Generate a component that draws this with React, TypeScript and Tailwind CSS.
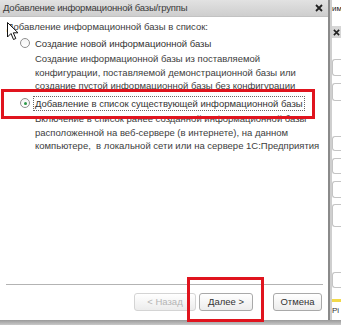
import React from 'react'

const font = { fontFamily: '"Liberation Sans", Arial, sans-serif' }

function Radio({ checked }: { checked?: boolean }) {
  return (
    <span className="relative inline-flex h-[10px] w-[10px] shrink-0 items-center justify-center rounded-full border border-[#8f8f8f] bg-gradient-to-b from-[#f4f4f4] to-white">
      {checked && <span className="h-[3px] w-[3px] rounded-full bg-[#2f9a4a]" />}
    </span>
  )
}

function Btn({ children, disabled }: { children: React.ReactNode; disabled?: boolean }) {
  return (
    <button
      className={`flex h-[18px] w-full items-center justify-center rounded-[3px] border bg-gradient-to-b from-white to-[#ececec] text-[9.5px] ${disabled ? 'border-[#d4d4d4] text-[#b4b4b4]' : 'border-[#a9a9a9] text-[#333]'}`}
    >
      {children}
    </button>
  )
}

export default function App() {
  return (
    <div className="relative flex h-[325px] w-[341px] flex-col overflow-hidden bg-white" style={font}>
      <div className="flex h-[320px]">
        {/* dialog */}
        <div className="flex w-[328px] flex-col">
          <div className="flex h-[17px] items-center justify-between border-b border-[#c2c2c2] bg-gradient-to-b from-[#e2e2e2] to-[#cecece] pl-[3px] pr-[5px]">
            <span className="text-[9.5px] tracking-[-0.2px] text-[#3a3a3a]">Добавление информационной базы/группы</span>
            <svg width="8" height="8" viewBox="0 0 8 8">
              <path d="M1 1L7 7M7 1L1 7" stroke="#222" strokeWidth="1.8" />
            </svg>
          </div>
          <div className="flex flex-1 flex-col whitespace-nowrap bg-white text-[9.5px] leading-[13.5px] text-[#3d3d3d]">
            <div className="ml-[7px] mt-[3px]">Добавление информационной базы в список:</div>
            <div className="ml-[20px] mt-[2px] flex items-center gap-[5px] py-px text-[#333]">
              <Radio />
              <span>Создание новой информационной базы</span>
            </div>
            <div className="ml-[35px] mt-[1px]">
              Создание информационной базы из поставляемой
              <br />
              конфигурации, поставляемой демонстрационной базы или
              <br />
              создание пустой информационной базы без конфигурации
            </div>
            <div className="ml-[20px] mt-[3px] flex items-center gap-[3px] text-[#333]">
              <Radio checked />
              <span className="border border-dotted border-[#666] px-px">Добавление в список существующей информационной базы</span>
            </div>
            <div className="ml-[35px] mt-[1px]">
              Включение в список ранее созданной информационной базы
              <br />
              расположенной на веб-сервере (в интернете), на данном
              <br />
              компьютере,&nbsp; в локальной сети или на сервере 1С:Предприятия
            </div>
            <div className="flex-1" />
            <div className="ml-[6px] mr-[5px] h-px bg-[#b3b3b3]" />
            <div className="mb-[9px] mt-[8px] flex justify-end gap-[3px] pr-[6px]">
              <div className="w-[62px]">
                <Btn disabled>&lt; Назад</Btn>
              </div>
              <div className="w-[54px]">
                <Btn>Далее &gt;</Btn>
              </div>
              <div className="ml-[17px] w-[49px]">
                <Btn>Отмена</Btn>
              </div>
            </div>
          </div>
        </div>
        {/* dialog border */}
        <div className="w-[2px] bg-[#8a8a8a]" />
        <div className="w-[2px] bg-[#cfcfcf]" />
        {/* background window */}
        <div className="flex flex-1 flex-col overflow-hidden bg-white">
          <div className="mt-[3px] w-[9px] overflow-hidden whitespace-nowrap text-[8px] text-[#222]">им</div>
          <div className="mt-[11px] flex h-[12px] items-center bg-[#d6d6d6] pl-[1px]">
            <svg width="7" height="7" viewBox="0 0 8 8">
              <path d="M1 1L7 7M7 1L1 7" stroke="#222" strokeWidth="1.8" />
            </svg>
          </div>
          <div className="mt-[21px] h-[17px] rounded-l-[3px] border border-r-0 border-[#c4c4c4]" />
          <div className="mt-[7px] h-[18px] rounded-l-[3px] border border-r-0 border-[#c4c4c4]" />
          <div className="mt-[35px] h-[15px] rounded-l-[3px] border border-r-0 border-[#c4c4c4]" />
          <div className="mt-[7px] h-[16px] rounded-l-[3px] border border-r-0 border-[#c4c4c4]" />
          <div className="mt-[7px] h-[17px] rounded-l-[3px] border border-r-0 border-[#c4c4c4]" />
          <div className="mt-[6px] h-[23px] rounded-l-[3px] border border-r-0 border-[#c4c4c4]" />
          <div className="mt-[45px] h-[16px] rounded-l-[3px] border border-r-0 border-[#c4c4c4]" />
          <div className="mt-[11px] h-[3px] bg-[#f2d94a]" />
          <div className="mt-[3px] text-[8px] text-[#333]">Pi</div>
        </div>
      </div>
      <div className="flex-1 bg-gradient-to-b from-[#9a9a9a] to-[#c9c9c9]" />

      {/* red highlights */}
      <div className="pointer-events-none absolute left-[1px] top-[89px] h-[30px] w-[314px] border-[3px] border-[#e0141e]" />
      <div className="pointer-events-none absolute left-[187px] top-[277px] h-[45px] w-[77px] border-[3px] border-[#e0141e]" />

      {/* mouse cursor */}
      <svg className="pointer-events-none absolute left-[7px] top-[22px]" width="12" height="19" viewBox="0 0 12 19">
        <path d="M0.5 0.5L0.5 15L4 11.5L6.5 17.5L8.8 16.5L6.3 10.8L11 10.8Z" fill="white" stroke="#111" strokeWidth="1" strokeLinejoin="round" />
      </svg>
    </div>
  )
}
